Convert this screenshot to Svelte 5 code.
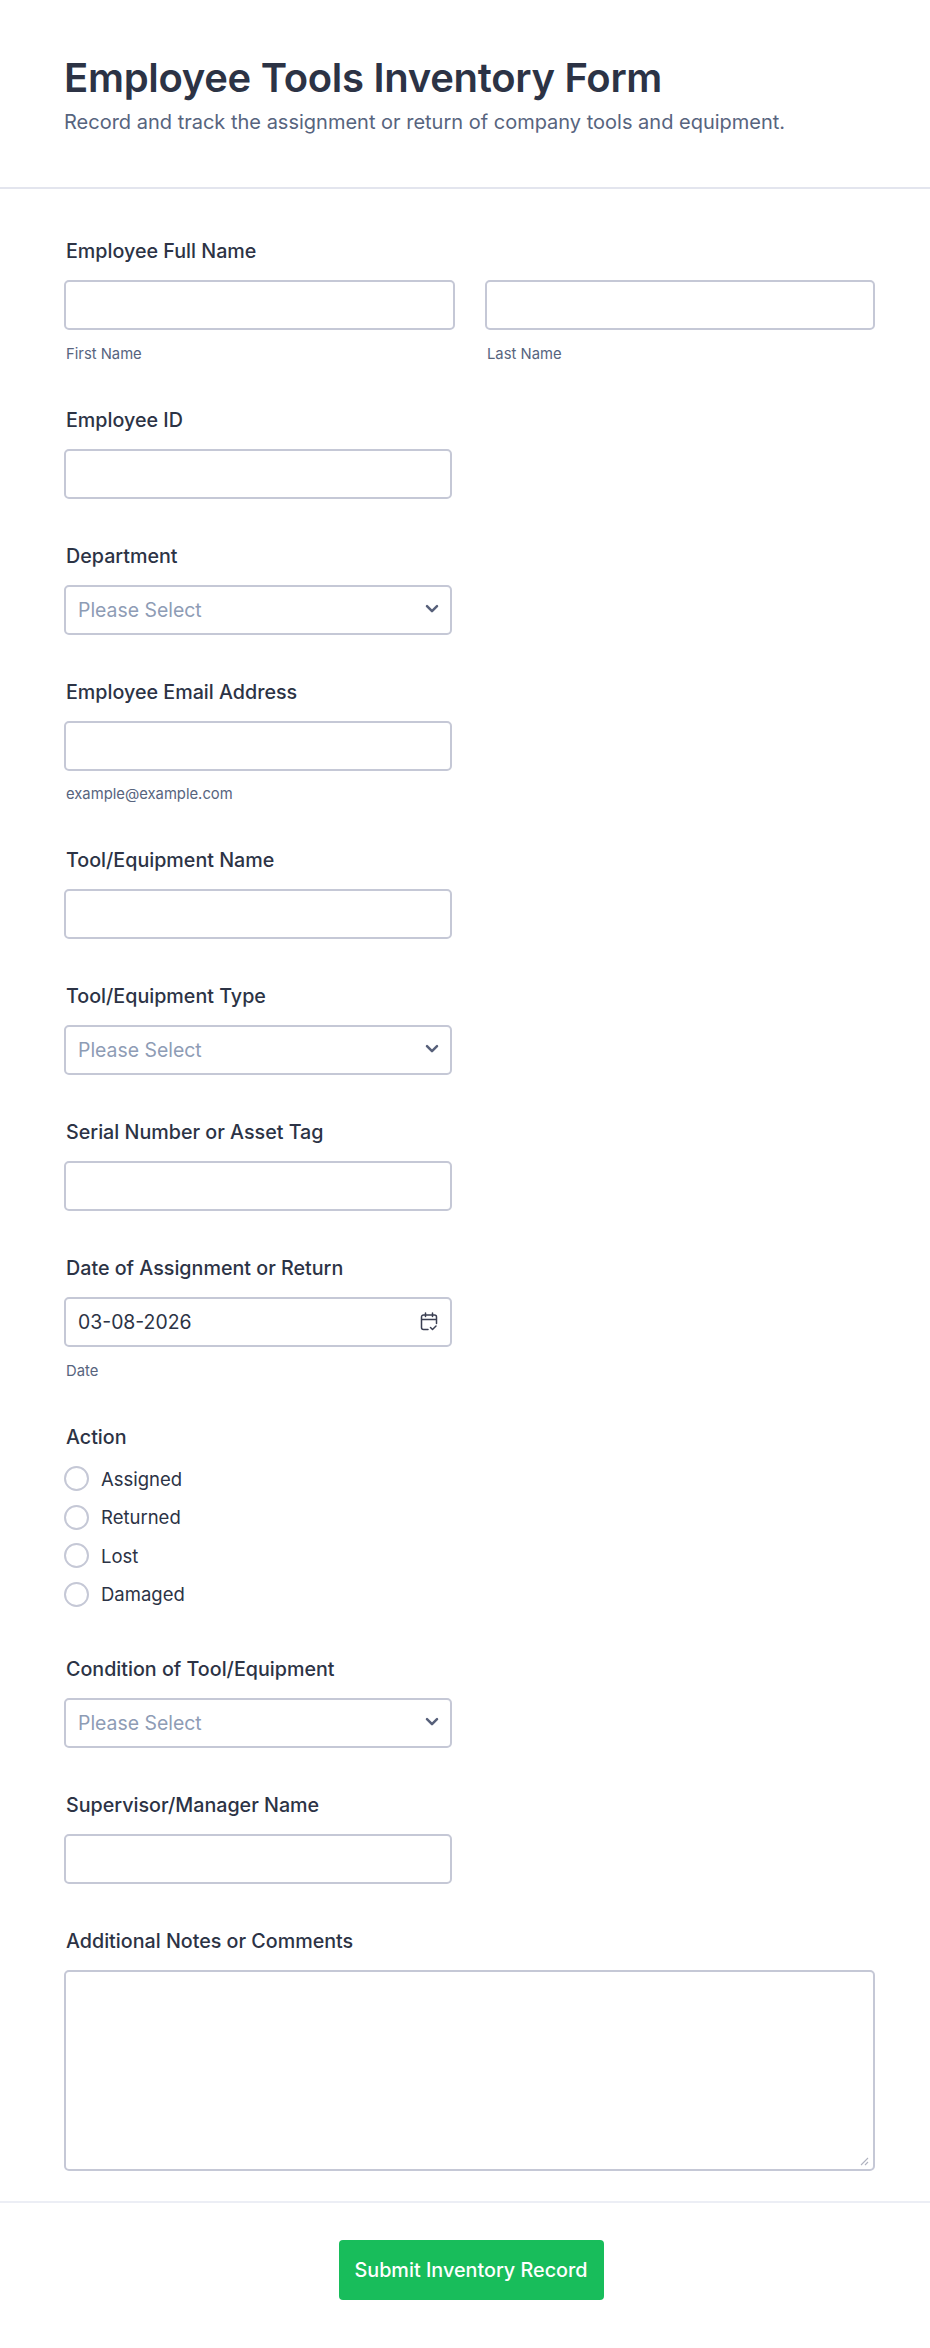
<script>
  const actions = ['Assigned', 'Returned', 'Lost', 'Damaged'];
</script>

{#snippet chevron()}
  <svg class="chev" width="14" height="10" viewBox="0 0 14 10" aria-hidden="true"><path d="M2 2.2 7 7.2l5-5" fill="none" stroke="#57607a" stroke-width="2.5" stroke-linecap="round" stroke-linejoin="round"/></svg>
{/snippet}

{#snippet selectField(label)}
  <div class="field">
    <label class="label" for={label}>{label}</label>
    <div class="control half">
      <select id={label} class="input select"><option>Please Select</option></select>
      {@render chevron()}
    </div>
  </div>
{/snippet}

{#snippet textField(label)}
  <div class="field">
    <label class="label" for={label}>{label}</label>
    <input id={label} class="input half" type="text" />
  </div>
{/snippet}

<div class="page">
  <header class="header">
    <h1>Employee Tools Inventory Form</h1>
    <p>Record and track the assignment or return of company tools and equipment.</p>
  </header>

  <main class="form">
    <div class="field">
      <div class="label">Employee Full Name</div>
      <div class="name-row">
        <div>
          <input class="input" type="text" aria-label="First Name" />
          <div class="sub">First Name</div>
        </div>
        <div>
          <input class="input" type="text" aria-label="Last Name" />
          <div class="sub">Last Name</div>
        </div>
      </div>
    </div>

    {@render textField('Employee ID')}
    {@render selectField('Department')}

    <div class="field">
      <label class="label" for="email">Employee Email Address</label>
      <input id="email" class="input half" type="text" />
      <div class="sub">example@example.com</div>
    </div>

    {@render textField('Tool/Equipment Name')}
    {@render selectField('Tool/Equipment Type')}
    {@render textField('Serial Number or Asset Tag')}

    <div class="field">
      <label class="label" for="date">Date of Assignment or Return</label>
      <div class="control half">
        <input id="date" class="input date" type="text" value="03-08-2026" />
        <svg class="cal" width="18" height="19" viewBox="0 0 18 19" aria-hidden="true">
          <path d="M8 17.5H3.5a2 2 0 0 1-2-2V5a2 2 0 0 1 2-2h11a2 2 0 0 1 2 2v6.5M1.5 7.5h15M5.5 1v3.5M12.5 1v3.5M10.5 15.5l2 2 3.5-3.5" fill="none" stroke="#3a3f52" stroke-width="1.5" stroke-linecap="round" stroke-linejoin="round"/>
        </svg>
      </div>
      <div class="sub">Date</div>
    </div>

    <div class="field">
      <div class="label">Action</div>
      <div class="radios">
        {#each actions as a}
          <label class="radio"><input type="radio" name="action" /><span>{a}</span></label>
        {/each}
      </div>
    </div>

    {@render selectField('Condition of Tool/Equipment')}
    {@render textField('Supervisor/Manager Name')}

    <div class="field notes">
      <label class="label" for="notes">Additional Notes or Comments</label>
      <div class="control">
        <textarea id="notes" class="input area"></textarea>
        <svg class="grip" width="9" height="9" viewBox="0 0 9 9" aria-hidden="true"><path d="M1 8 8 1M5 8l3-3" fill="none" stroke="#b0b3c0" stroke-width="1.1"/></svg>
      </div>
    </div>
  </main>

  <footer class="footer">
    <button class="submit" type="button">Submit Inventory Record</button>
  </footer>
</div>

<style>
  :global(body) {
    margin: 0;
    background: #fff;
  }
  .page {
    width: 930px;
    height: 2348px;
    font-family: Inter, "Liberation Sans", sans-serif;
    color: #2c3345;
    background: #fff;
    box-sizing: border-box;
  }
  .header {
    height: 189px;
    box-sizing: border-box;
    padding: 54px 64px 0;
    border-bottom: 2px solid #e3e5ee;
  }
  h1 {
    margin: 0;
    font-size: 40px;
    line-height: 48px;
    font-weight: 600;
    letter-spacing: -0.3px;
    color: #2c3345;
  }
  .header p {
    margin: 8px 0 0;
    font-size: 20px;
    line-height: 24px;
    color: #57647e;
  }
  .form {
    padding: 50px 55px 0 64px;
    display: flex;
    flex-direction: column;
  }
  .field {
    margin-bottom: 45px;
  }
  .label {
    display: block;
    font-size: 19.7px;
    line-height: 24px;
    font-weight: 450;
    color: #2c3345;
    padding-left: 2px;
    margin-bottom: 17px;
  }
  .input {
    display: block;
    width: 100%;
    height: 50px;
    box-sizing: border-box;
    border: 2px solid #c5c8d6;
    border-radius: 5px;
    background: #fff;
    padding: 0 12px;
    font: 400 19.4px Inter, "Liberation Sans", sans-serif;
    color: #2c3345;
    outline: none;
  }
  .half {
    width: 388px;
  }
  .name-row {
    display: grid;
    grid-template-columns: 391px 390px;
    column-gap: 30px;
  }
  .sub {
    margin-top: 14.7px;
    padding-left: 2px;
    font-size: 14.8px;
    line-height: 18px;
    color: #57647e;
  }
  .control {
    position: relative;
  }
  .select {
    appearance: none;
    color: #8e9cb5;
  }
  .chev {
    position: absolute;
    right: 13px;
    top: 19px;
  }
  .cal {
    position: absolute;
    right: 14px;
    top: 15px;
  }
  .grip {
    position: absolute;
    right: 6px;
    bottom: 5px;
  }
  .radios {
    display: flex;
    flex-direction: column;
    gap: 13.5px;
    margin-top: 1px;
    padding-bottom: 5px;
  }
  .radio {
    display: flex;
    align-items: center;
    height: 25px;
    font-size: 18.5px;
  }
  .radio input {
    appearance: none;
    width: 25px;
    height: 25px;
    margin: 0 12px 0 0;
    border: 2px solid #c5c8d6;
    border-radius: 50%;
    background: #fff;
  }
  .area {
    height: 201px;
    resize: none;
    padding: 12px;
  }
  .notes {
    margin-bottom: 30px;
  }
  .footer {
    border-top: 2px solid #eceef5;
    display: flex;
    justify-content: center;
    padding: 37px 0 0 12px;
  }
  .submit {
    width: 265px;
    height: 60px;
    border: 0;
    border-radius: 4px;
    background: #18bd5b;
    color: #fff;
    font: 500 19.8px Inter, "Liberation Sans", sans-serif;
  }
</style>
